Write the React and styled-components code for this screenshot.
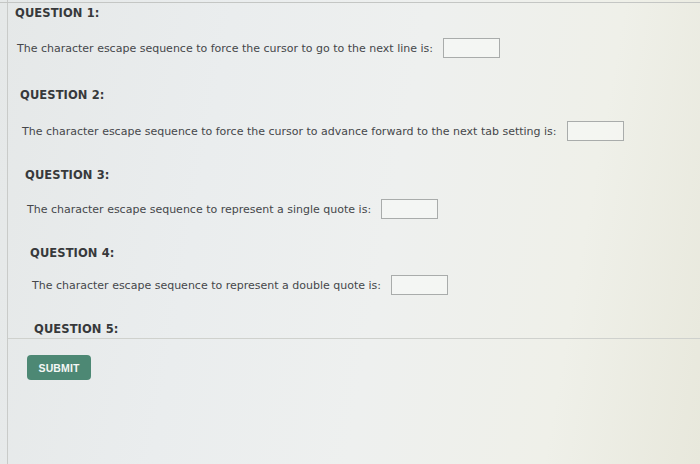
import React from "react";
import styled, { createGlobalStyle } from "styled-components";

const Global = createGlobalStyle`
  html, body { margin: 0; padding: 0; }
  body {
    width: 700px;
    height: 464px;
    overflow: hidden;
    font-family: "DejaVu Sans", Verdana, sans-serif;
    background: linear-gradient(100deg, #e5e8e8 0%, #eaedee 30%, #eef0ef 55%, #eff0e9 80%, #e8e8dc 100%);
  }
`;

const Page = styled.div`
  height: 464px;
  box-sizing: border-box;
  margin-left: 7px;
  padding-top: 3px;
  border-left: 1px solid #c9cbc9;
  display: flex;
  flex-direction: column;
`;

const TopRule = styled.div`
  position: absolute;
  left: 0;
  right: 0;
  top: 2px;
  height: 1px;
  background: #c4c6c4;
`;

const Questions = styled.div`
  display: flex;
  flex-direction: column;
  border-bottom: 1px solid #cfd1cd;
`;

const Section = styled.section`
  padding-left: ${(p) => p.$indent}px;
  margin-bottom: ${(p) => p.$after}px;
  display: flex;
  flex-direction: column;
`;

const Heading = styled.h3`
  margin: 0;
  height: ${(p) => (p.$short ? 19 : 20)}px;
  line-height: 20px;
  font-size: 11.5px;
  font-weight: bold;
  color: #37393b;
  letter-spacing: 0.1px;
`;

const Prompt = styled.div`
  margin-top: ${(p) => p.$gap}px;
  padding-left: 2px;
  height: 24px;
  display: flex;
  align-items: center;
  gap: 10px;
  font-size: 11px;
  color: #45474a;
`;

const Blank = styled.input`
  width: 57px;
  height: 20px;
  box-sizing: border-box;
  border: 1px solid #a9acab;
  background: rgba(250, 251, 250, 0.5);
  padding: 0;
  margin: 0;
`;

const Footer = styled.div`
  padding: 16px 0 0 19px;
`;

const Submit = styled.button`
  width: 64px;
  height: 25px;
  border: none;
  border-radius: 4px;
  background: #4d8874;
  color: #f4f7f5;
  font-family: "Liberation Sans", Arial, sans-serif;
  font-weight: bold;
  font-size: 10.5px;
  letter-spacing: 0.1px;
  padding: 0;
`;

const questions = [
  { n: 1, indent: 7, gap: 13, after: 25, text: "The character escape sequence to force the cursor to go to the next line is:" },
  { n: 2, indent: 12, gap: 14, after: 22, text: "The character escape sequence to force the cursor to advance forward to the next tab setting is:" },
  { n: 3, indent: 17, gap: 12, after: 22, text: "The character escape sequence to represent a single quote is:" },
  { n: 4, indent: 22, gap: 10, after: 22, text: "The character escape sequence to represent a double quote is:" },
  { n: 5, indent: 26, gap: 0, after: 0 },
];

export default function App() {
  return (
    <>
      <Global />
      <TopRule />
      <Page>
        <Questions>
          {questions.map((q) => (
            <Section key={q.n} $indent={q.indent} $after={q.after}>
              <Heading $short={!q.text}>QUESTION {q.n}:</Heading>
              {q.text && (
                <Prompt $gap={q.gap}>
                  <span>{q.text}</span>
                  <Blank type="text" aria-label={`Answer ${q.n}`} />
                </Prompt>
              )}
            </Section>
          ))}
        </Questions>
        <Footer>
          <Submit>SUBMIT</Submit>
        </Footer>
      </Page>
    </>
  );
}
